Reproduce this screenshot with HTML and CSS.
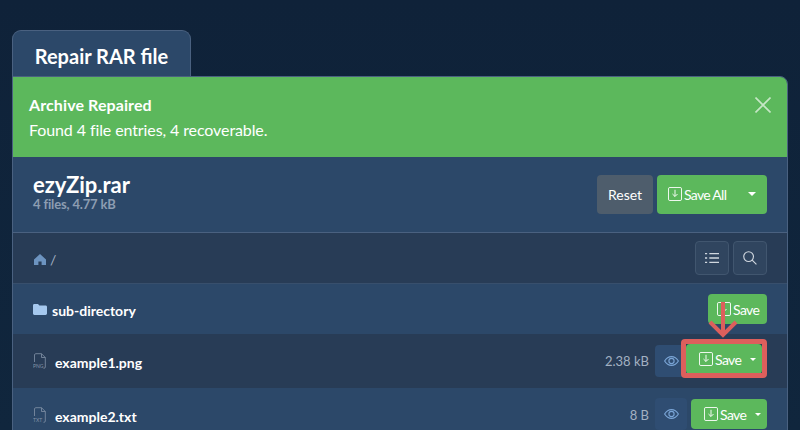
FILE: index.html

```html
<!DOCTYPE html>
<html>
<head>
  <title>Repair RAR file</title>
  <link rel="stylesheet" href="styles.css">
</head>
<body>
  <div class="page">
    <h1 class="tab">Repair RAR file</h1>
    <div class="panel">
      <div class="alert">
        <div class="alert-title">Archive Repaired</div>
        <div class="alert-text">Found 4 file entries, 4 recoverable.</div>
        <svg class="alert-close" viewBox="0 0 16 16"><path d="M0.5 0.5L15.5 15.5M15.5 0.5L0.5 15.5"/></svg>
      </div>

      <div class="archive-head">
        <div class="archive-info">
          <div class="archive-name">ezyZip.rar</div>
          <div class="archive-meta">4 files, 4.77 kB</div>
        </div>
        <div class="archive-actions">
          <button class="btn btn-grey">Reset</button>
          <button class="btn btn-green btn-all">
            <svg class="save-icon" viewBox="0 0 15 15"><rect x="0.5" y="0.5" width="14" height="14" rx="1.5"/><path d="M7.5 3V10M4.8 7.5L7.5 10.2L10.2 7.5"/></svg>
            <span>Save All</span>
            <span class="caret caret-all"></span>
          </button>
        </div>
      </div>

      <div class="crumbs">
        <div class="crumb-path">
          <svg class="home-icon" viewBox="0 0 12 11"><path d="M6 0L12 5.6V11H7.6V7.4H4.4V11H0V5.6Z"/></svg>
          <span>/</span>
        </div>
        <div class="crumb-tools">
          <button class="tool">
            <svg viewBox="0 0 13 10"><path d="M4 1H13M4 5H13M4 9H13M0 1H2M0 5H2M0 9H2"/></svg>
          </button>
          <button class="tool">
            <svg viewBox="0 0 15 15"><circle cx="6" cy="6" r="5.2"/><path d="M9.8 9.8L14.4 14.4"/></svg>
          </button>
        </div>
      </div>

      <div class="row">
        <svg class="folder-icon" viewBox="0 0 14 11"><path d="M1.4 0H5L6.4 1.5H12.6C13.4 1.5 14 2.1 14 2.9V9.6C14 10.4 13.4 11 12.6 11H1.4C0.6 11 0 10.4 0 9.6V1.4C0 0.6 0.6 0 1.4 0Z"/></svg>
        <span class="row-name">sub-directory</span>
        <button class="btn btn-green btn-plain">
          <svg class="save-icon" viewBox="0 0 15 15"><rect x="0.5" y="0.5" width="14" height="14" rx="1.5"/><path d="M7.5 3V10M4.8 7.5L7.5 10.2L10.2 7.5"/></svg>
          <span>Save</span>
        </button>
      </div>

      <div class="row row-dark row-file">
        <svg class="file-icon" viewBox="0 0 13 16"><path d="M1.5 9V2C1.5 1.2 2 0.7 2.8 0.7H8.5L12.3 4.5V14C12.3 14.8 11.8 15.3 11 15.3H10.5M8.5 0.7V4.5H12.3"/><text x="0" y="15">PNG</text></svg>
        <span class="row-name">example1.png</span>
        <span class="row-size">2.38 kB</span>
        <button class="eye"><svg viewBox="0 0 15 10"><path d="M0.6 5C2.4 2 4.8 0.6 7.5 0.6S12.6 2 14.4 5C12.6 8 10.2 9.4 7.5 9.4S2.4 8 0.6 5Z"/><circle cx="7.5" cy="5" r="2.6"/></svg></button>
        <button class="btn btn-green btn-split btn-focus">
          <svg class="save-icon" viewBox="0 0 15 15"><rect x="0.5" y="0.5" width="14" height="14" rx="1.5"/><path d="M7.5 3V10M4.8 7.5L7.5 10.2L10.2 7.5"/></svg>
          <span>Save</span>
          <span class="caret"></span>
        </button>
      </div>

      <div class="row row-file">
        <svg class="file-icon" viewBox="0 0 13 16"><path d="M1.5 9V2C1.5 1.2 2 0.7 2.8 0.7H8.5L12.3 4.5V14C12.3 14.8 11.8 15.3 11 15.3H10.5M8.5 0.7V4.5H12.3"/><text x="0" y="15">TXT</text></svg>
        <span class="row-name">example2.txt</span>
        <span class="row-size">8 B</span>
        <button class="eye"><svg viewBox="0 0 15 10"><path d="M0.6 5C2.4 2 4.8 0.6 7.5 0.6S12.6 2 14.4 5C12.6 8 10.2 9.4 7.5 9.4S2.4 8 0.6 5Z"/><circle cx="7.5" cy="5" r="2.6"/></svg></button>
        <button class="btn btn-green btn-split">
          <svg class="save-icon" viewBox="0 0 15 15"><rect x="0.5" y="0.5" width="14" height="14" rx="1.5"/><path d="M7.5 3V10M4.8 7.5L7.5 10.2L10.2 7.5"/></svg>
          <span>Save</span>
          <span class="caret"></span>
        </button>
      </div>
    </div>

    <div class="callout-box"></div>
    <svg class="callout-arrow" viewBox="0 0 30 36"><path d="M15 0V33M2 20L15 33L28 20"/></svg>
  </div>
</body>
</html>
```

FILE: styles.css

```css
:root {
  --bg-color: #0f2239;
  --panel-color: #2c4869;
  --panel-dark: #283c56;
  --line-color: #4a6180;
  --green: #5cb85c;
  --red: #dd5f5c;
}

html, body {
  height: 100%;
}

body {
  margin: 0;
  padding: 0;
  overflow: hidden;
  font-family: Lato, Arial, sans-serif;
  color: #fff;
  background: linear-gradient(to bottom, #0f2239, #10263d);
}

button {
  font-family: inherit;
  border: 0;
  cursor: pointer;
}

.page {
  position: relative;
  height: 430px;
  padding: 30px 12px 0;
  box-sizing: border-box;
  overflow: hidden;
}

.tab {
  width: 179px;
  height: 47px;
  margin: 0 0 -1px;
  box-sizing: border-box;
  padding-top: 12px;
  text-align: center;
  font-size: 20px;
  line-height: 26px;
  font-weight: 700;
  background-color: var(--panel-color);
  border: 1px solid var(--line-color);
  border-bottom: 0;
  border-radius: 9px 9px 0 0;
}

.panel {
  border: 1px solid var(--line-color);
  border-radius: 0 8px 0 0;
  background-color: var(--panel-color);
  height: 400px;
  box-sizing: border-box;
  overflow: hidden;
}

.alert {
  position: relative;
  height: 80px;
  padding: 15px 16px 0;
  box-sizing: border-box;
  background-color: var(--green);
  font-size: 16px;
  line-height: 25px;
  letter-spacing: -0.1px;
}

.alert-title {
  font-weight: 700;
  letter-spacing: 0.1px;
}

.alert-close {
  position: absolute;
  top: 20px;
  right: 16px;
  width: 16px;
  height: 16px;
  fill: none;
  stroke: #c6e6c6;
  stroke-width: 1.6;
}

.archive-head {
  height: 76px;
  padding: 0 20px;
  display: flex;
  align-items: center;
  justify-content: space-between;
  border-bottom: 1px solid var(--line-color);
  box-sizing: border-box;
}

.archive-info {
  padding-bottom: 3px;
}

.archive-name {
  font-size: 22px;
  line-height: 23px;
  font-weight: 700;
  margin-top: -2px;
}

.archive-meta {
  margin-top: 1px;
  font-size: 13px;
  line-height: 14px;
  font-weight: 700;
  letter-spacing: -0.15px;
  color: #8d9db2;
}

.archive-actions {
  display: flex;
  gap: 4px;
  margin-bottom: 1px;
}

.btn {
  display: flex;
  align-items: center;
  height: 39px;
  border-radius: 4px;
  color: #fff;
  font-size: 14px;
  padding: 0;
}

.btn-grey {
  width: 56px;
  justify-content: center;
  background-color: #4e5d6c;
}

.btn-green {
  background-color: var(--green);
}

.btn-all {
  width: 110px;
  padding-left: 11px;
  box-sizing: border-box;
  letter-spacing: -0.7px;
}

.save-icon {
  width: 14px;
  height: 14px;
  margin-right: 2px;
  fill: none;
  stroke: #fff;
  stroke-width: 1;
}

.caret {
  width: 0;
  height: 0;
  margin-left: auto;
  border-left: 3px solid transparent;
  border-right: 3px solid transparent;
  border-top: 3px solid #fff;
}

.caret-all {
  margin-right: 11px;
  border-left-width: 4px;
  border-right-width: 4px;
  border-top-width: 4px;
}

.crumbs {
  height: 51px;
  padding: 0 20px;
  display: flex;
  align-items: center;
  justify-content: space-between;
  background-color: var(--panel-dark);
  border-bottom: 1px solid #384f6c;
  box-sizing: border-box;
}

.crumb-path {
  display: flex;
  align-items: center;
  gap: 4px;
  padding: 3px 0 0 1px;
  font-size: 14px;
  color: #a3b1c2;
}

.home-icon {
  width: 12px;
  height: 11px;
  fill: #6d94c0;
}

.crumb-tools {
  display: flex;
  gap: 4px;
}

.tool {
  width: 34px;
  height: 34px;
  padding: 0;
  display: flex;
  align-items: center;
  justify-content: center;
  background-color: #30455f;
  border: 1px solid #41566f;
  border-radius: 4px;
}

.tool svg {
  width: 14px;
  height: 14px;
  fill: none;
  stroke: #d0d7df;
  stroke-width: 1.2;
}

.row {
  height: 50px;
  padding: 0 20px 0 20px;
  display: flex;
  align-items: center;
  background-color: var(--panel-color);
}

.row-dark {
  background-color: var(--panel-dark);
}

.row-file {
  height: 54px;
}

.folder-icon {
  width: 14px;
  height: 11px;
  margin-right: 5px;
  fill: #a5c8ee;
}

.file-icon {
  width: 13px;
  height: 16px;
  margin-right: 9px;
  fill: none;
  stroke: #8393a8;
  stroke-width: 0.8;
}

.file-icon text {
  font-size: 5px;
  fill: #8393a8;
  stroke: none;
}

.row-name {
  padding-top: 2px;
  font-size: 14px;
  font-weight: 700;
}

.btn-plain {
  margin-left: auto;
  height: 30px;
  width: 59px;
  padding-left: 9px;
  box-sizing: border-box;
  letter-spacing: -0.6px;
}

.row-size {
  margin-left: auto;
  margin-right: 6px;
  font-size: 13px;
  color: #a3b1c2;
}

.eye {
  width: 32px;
  height: 32px;
  padding: 0;
  margin: 0 4px 2px 0;
  display: flex;
  align-items: center;
  justify-content: center;
  background-color: #2f4d72;
  border-radius: 4px;
}

.row-dark .eye {
  margin-bottom: 0;
}

.eye svg {
  width: 15px;
  height: 10px;
  fill: none;
  stroke: #7aa5d6;
  stroke-width: 1.1;
}

.btn-split {
  width: 76px;
  height: 30px;
  margin-bottom: 2px;
  padding: 0 6px 0 13px;
  box-sizing: border-box;
  letter-spacing: -0.6px;
}

.btn-focus {
  margin: 0 5px 4px -5px;
}

.callout-box {
  position: absolute;
  left: 681px;
  top: 339px;
  width: 86px;
  height: 39px;
  box-sizing: border-box;
  border: 5px solid var(--red);
  border-radius: 4px;
}

.callout-arrow {
  position: absolute;
  left: 708px;
  top: 302px;
  width: 30px;
  height: 36px;
  fill: none;
  stroke: var(--red);
  stroke-width: 4;
}
```
